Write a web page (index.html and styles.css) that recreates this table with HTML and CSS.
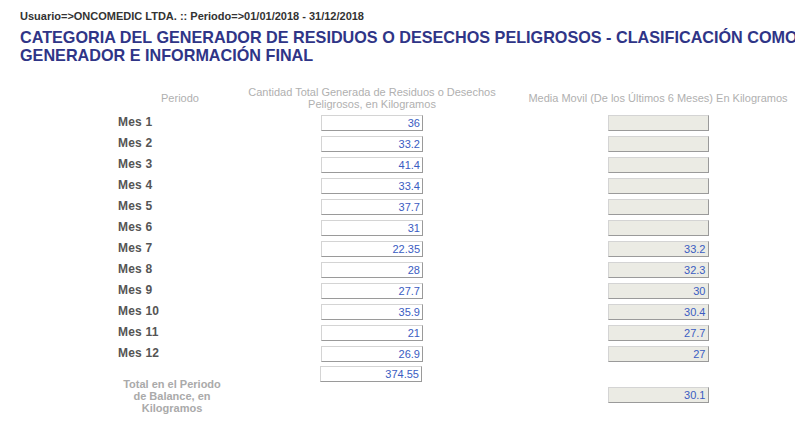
FILE: index.html
```html
<!DOCTYPE html>
<html>
<head>
<meta charset="utf-8">
<link rel="stylesheet" href="styles.css">
</head>
<body>
<div class="page">
  <div class="user">Usuario=&gt;ONCOMEDIC LTDA. :: Periodo=&gt;01/01/2018 - 31/12/2018</div>
  <h1 class="title">CATEGORIA DEL GENERADOR DE RESIDUOS O DESECHOS PELIGROSOS - CLASIFICACIÓN COMO GENERADOR E INFORMACIÓN FINAL</h1>
  <div class="grid">
    <div class="hdr c1">Periodo</div>
    <div class="hdr c2"><span>Cantidad Total Generada de Residuos o Desechos<br>Peligrosos, en Kilogramos</span></div>
    <div class="hdr c3">Media Movil (De los Últimos 6 Meses) En Kilogramos</div>

    <div class="mes">Mes 1</div><div class="cell"><div class="inp">36</div></div><div class="cell"><div class="inp dis"></div></div>
    <div class="mes">Mes 2</div><div class="cell"><div class="inp">33.2</div></div><div class="cell"><div class="inp dis"></div></div>
    <div class="mes">Mes 3</div><div class="cell"><div class="inp">41.4</div></div><div class="cell"><div class="inp dis"></div></div>
    <div class="mes">Mes 4</div><div class="cell"><div class="inp">33.4</div></div><div class="cell"><div class="inp dis"></div></div>
    <div class="mes">Mes 5</div><div class="cell"><div class="inp">37.7</div></div><div class="cell"><div class="inp dis"></div></div>
    <div class="mes">Mes 6</div><div class="cell"><div class="inp">31</div></div><div class="cell"><div class="inp dis"></div></div>
    <div class="mes">Mes 7</div><div class="cell"><div class="inp">22.35</div></div><div class="cell"><div class="inp dis">33.2</div></div>
    <div class="mes">Mes 8</div><div class="cell"><div class="inp">28</div></div><div class="cell"><div class="inp dis">32.3</div></div>
    <div class="mes">Mes 9</div><div class="cell"><div class="inp">27.7</div></div><div class="cell"><div class="inp dis">30</div></div>
    <div class="mes">Mes 10</div><div class="cell"><div class="inp">35.9</div></div><div class="cell"><div class="inp dis">30.4</div></div>
    <div class="mes">Mes 11</div><div class="cell"><div class="inp">21</div></div><div class="cell"><div class="inp dis">27.7</div></div>
    <div class="mes">Mes 12</div><div class="cell"><div class="inp">26.9</div></div><div class="cell"><div class="inp dis">27</div></div>
  </div>
  <div class="total">
    <div class="tcol1"><div class="tlabel">Total en el Periodo de Balance, en Kilogramos</div></div>
    <div class="tcell2"><div class="inp tot">374.55</div></div>
    <div class="tcell3"><div class="inp dis">30.1</div></div>
  </div>
</div>
</body>
</html>
```

FILE: styles.css
```css
html, body {
  margin: 0;
  padding: 0;
  background: #fff;
}
body {
  font-family: "Liberation Sans", Arial, sans-serif;
  overflow: hidden;
}
.page {
  padding: 10px 0 0 20px;
}
.user {
  font-size: 11px;
  font-weight: bold;
  color: #333;
  line-height: 13px;
}
.title {
  margin: 5px 0 0 0;
  font-size: 16.2px;
  font-weight: bold;
  color: #2f3587;
  line-height: 18px;
  width: 790px;
}
.grid {
  display: grid;
  grid-template-columns: 140px 244px 293px;
  grid-template-rows: 27px;
  grid-auto-rows: 21px;
  margin-left: 90px;
  margin-top: 21px;
}
.hdr {
  font-size: 11px;
  color: #b0b0b0;
  line-height: 12px;
  text-align: center;
  height: 26px;
  display: flex;
  align-items: center;
  justify-content: center;
  align-self: start;
  white-space: nowrap;
}
.c3 { padding-left: 35px; }
.mes {
  font-size: 12px;
  font-weight: bold;
  color: #555;
  padding-left: 8px;
  line-height: 21px;
  letter-spacing: 0.2px;
}
.cell {
  display: flex;
  justify-content: center;
  align-items: center;
}
.grid > .cell:nth-child(3n) {
  padding-left: 35px;
}
.inp {
  box-sizing: border-box;
  width: 102px;
  height: 16px;
  border: 1px solid;
  border-color: #d4d4d4 #9a9a9a #9a9a9a #d4d4d4;
  background: #fff;
  color: #3a5cc2;
  font-size: 11px;
  text-align: right;
  padding-right: 2px;
  line-height: 14px;
}
.inp.dis {
  background: #ebebe4;
  width: 101px;
}
.total {
  display: flex;
  margin-left: 90px;
  margin-top: 2px;
}
.tcol1 {
  width: 140px;
  flex: none;
}
.tlabel {
  width: 106px;
  margin-left: 9px;
  margin-top: 12px;
  font-size: 11px;
  font-weight: bold;
  color: #aaa;
  text-align: center;
  line-height: 12px;
}
.tcell2 {
  width: 244px;
  flex: none;
  display: flex;
  justify-content: center;
  align-items: flex-start;
}
.inp.tot {
  margin-left: -2px;
}
.tcell3 {
  width: 258px;
  flex: none;
  margin-left: 35px;
  padding-top: 21px;
  display: flex;
  justify-content: center;
  align-items: flex-start;
}
```
